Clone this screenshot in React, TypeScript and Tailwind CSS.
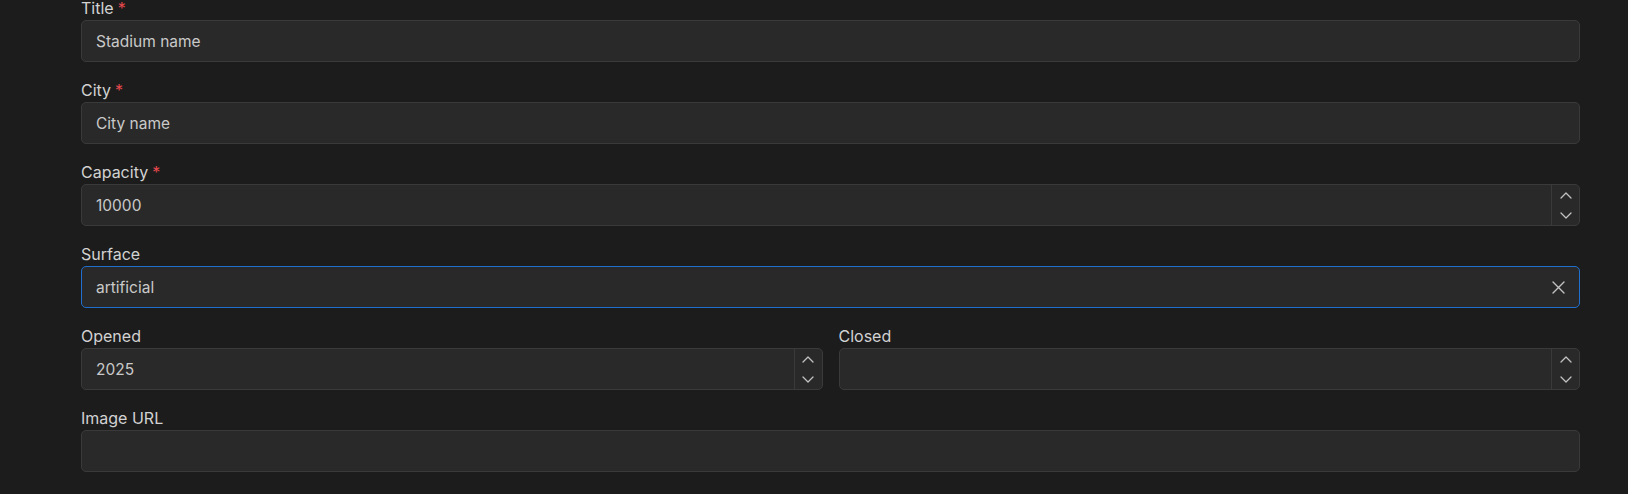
function Label({ text, required }: { text: string; required?: boolean }) {
  return (
    <div className="mb-[1px] pt-[1px] text-[16px] leading-[22px] text-[#d2d2d2]">
      {text}
      {required && <span className="ml-1 text-[#e5484d]">*</span>}
    </div>
  );
}

function Chevron({ up }: { up?: boolean }) {
  return (
    <svg width="12" height="7" viewBox="0 0 12 7" fill="none" stroke="currentColor" strokeWidth="1.3" strokeLinecap="round" strokeLinejoin="round">
      <path d={up ? 'M1 6 L6 1 L11 6' : 'M1 1 L6 6 L11 1'} />
    </svg>
  );
}

function Spinner() {
  return (
    <div className="flex w-[28px] flex-col items-center justify-center gap-[13px] border-l border-[#3a3a3a] text-[#c2c2c2]">
      <Chevron up />
      <Chevron />
    </div>
  );
}

function Field({
  label,
  required,
  value,
  spinner,
  clear,
  focused,
}: {
  label: string;
  required?: boolean;
  value?: string;
  spinner?: boolean;
  clear?: boolean;
  focused?: boolean;
}) {
  return (
    <div className="flex flex-col">
      <Label text={label} required={required} />
      <div
        className={`flex h-[42px] items-stretch rounded-[5px] border bg-[#292929] ${
          focused ? 'border-[#1f6fd1]' : 'border-[#3a3a3a]'
        }`}>
        <div className="flex flex-1 items-center pl-[14px] pt-[2px] text-[15.5px] text-[#c9c9c9]">
          {value}
        </div>
        {clear && (
          <div className="flex w-[42px] items-center justify-center text-[#c2c2c2]">
            <svg width="13" height="13" viewBox="0 0 13 13" fill="none" stroke="currentColor" strokeWidth="1.4" strokeLinecap="round">
              <path d="M1 1 L12 12 M12 1 L1 12" />
            </svg>
          </div>
        )}
        {spinner && <Spinner />}
      </div>
    </div>
  );
}

export default function App() {
  return (
    <div
      className="h-[494px] overflow-hidden bg-[#1c1c1c]"
      style={{ fontFamily: 'Inter, "Noto Sans", sans-serif' }}>
      <div className="ml-[81px] mt-[-4px] flex w-[1499px] flex-col gap-4">
        <Field label="Title" required value="Stadium name" />
        <Field label="City" required value="City name" />
        <Field label="Capacity" required value="10000" spinner />
        <Field label="Surface" value="artificial" clear focused />
        <div className="grid grid-cols-2 gap-4">
          <Field label="Opened" value="2025" spinner />
          <Field label="Closed" spinner />
        </div>
        <Field label="Image URL" />
        <div className="pt-[6px] text-center text-[15px] text-[#3b82f6]">
          <span className="ml-[-40px]">l i i k</span>
        </div>
      </div>
    </div>
  );
}
